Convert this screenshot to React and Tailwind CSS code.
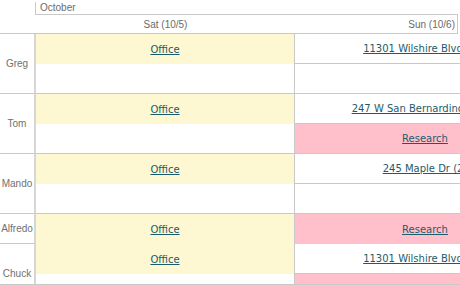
import React from 'react';

const linkCls = "font-['DejaVu_Sans',sans-serif] text-[10px] text-[#1d5b6a] underline whitespace-nowrap";

const rows = [
  {
    name: 'Greg',
    rowCls: 'h-[60px]',
    lined: true,
    sat: [{ text: 'Office', kind: 'yellow' }, { kind: 'empty' }],
    sun: [{ text: '11301 Wilshire Blvd (VA)', kind: 'white' }, { kind: 'empty' }],
  },
  {
    name: 'Tom',
    rowCls: 'h-[60px]',
    lined: true,
    sat: [{ text: 'Office', kind: 'yellow' }, { kind: 'empty' }],
    sun: [{ text: '247 W San Bernardino Rd (C)', kind: 'white' }, { text: 'Research', kind: 'pink' }],
  },
  {
    name: 'Mando',
    rowCls: 'h-[60px]',
    lined: true,
    sat: [{ text: 'Office', kind: 'yellow' }, { kind: 'empty' }],
    sun: [{ text: '245 Maple Dr (2)', kind: 'white' }, { kind: 'empty' }],
  },
  {
    name: 'Alfredo',
    rowCls: 'h-[30px]',
    lined: false,
    sat: [{ text: 'Office', kind: 'yellow' }],
    sun: [{ text: 'Research', kind: 'pink' }],
  },
  {
    name: 'Chuck',
    rowCls: 'h-[60px]',
    lined: true,
    sat: [{ text: 'Office', kind: 'yellow' }, { kind: 'empty' }],
    sun: [{ text: '11301 Wilshire Blvd (VA)', kind: 'white' }, { text: 'Research', kind: 'pink' }],
  },
];

const Slot = ({ slot, first, single }) => {
  let cls = 'flex items-center justify-center overflow-hidden ';
  cls += single || first ? 'h-[30px] ' : 'h-[29px] ';
  if (slot.kind === 'yellow') cls += 'bg-[#fdf8d1]';
  else if (slot.kind === 'pink') cls += 'bg-[#ffc0cb]';
  else if (slot.kind === 'white') cls += 'bg-white border-b border-[#c9c9c9]';
  else cls += 'bg-white';

  return (
    <div className={cls}>
      {slot.text && <a href="#" className={linkCls}>{slot.text}</a>}
    </div>
  );
};

const DayCell = ({ slots, lined, extra }) => (
  <div className={`flex flex-col ${lined ? 'border-b border-[#c9c9c9]' : ''} ${extra}`}>
    {slots.map((s, i) => (
      <Slot key={i} slot={s} first={i === 0} single={slots.length === 1} />
    ))}
  </div>
);

export default function App() {
  return (
    <div className="w-[460px] h-[285px] overflow-hidden bg-white font-['Liberation_Sans',Arial,sans-serif]">
      {/* header */}
      <div className="flex h-[15px]">
        <div className="w-[35px] shrink-0" />
        <div className="flex-1 mt-[2px] border-l border-b border-[#c9c9c9] pl-[4px] text-[10px] leading-[11px] text-[#6b6b6b] mr-[2px]">
          October
        </div>
      </div>
      <div className="flex h-[19px] border-b border-[#c9c9c9] w-[458px]">
        <div className="w-[36px] shrink-0" />
        <div className="w-[259px] shrink-0 flex items-center justify-center text-[10px] text-[#6b6b6b]">
          Sat (10/5)
        </div>
        <div className="w-[163px] shrink-0 flex items-center justify-end pr-[2px] border-r border-[#c9c9c9] text-[10px] text-[#6b6b6b]">
          Sun (10/6)
        </div>
      </div>

      {/* body */}
      <div className="h-[251px] overflow-hidden border-b border-[#c9c9c9]">
        {rows.map((r) => (
          <div key={r.name} className={`flex ${r.rowCls}`}>
            <div className="w-[36px] shrink-0 border-r-2 border-r-[#d6d6d6] border-b border-b-[#c9c9c9] flex items-center justify-center text-[10px] text-[#707070]">
              {r.name}
            </div>
            <DayCell slots={r.sat} lined={r.lined} extra="w-[259px] shrink-0 border-r border-r-[#c9c9c9]" />
            <DayCell slots={r.sun} lined={r.lined} extra="w-[260px] shrink-0" />
          </div>
        ))}
      </div>
    </div>
  );
}
